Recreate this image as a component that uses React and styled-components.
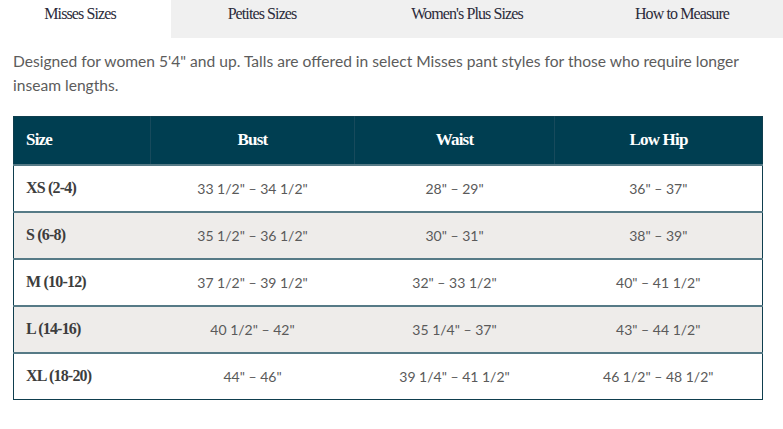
import React, { useState } from 'react';
import styled, { createGlobalStyle } from 'styled-components';

const GlobalStyle = createGlobalStyle`
  body {
    margin: 0;
    background: #fff;
    font-family: 'Lato', 'Open Sans', sans-serif;
  }
`;

const Page = styled.div`
  width: 783px;
`;

const TabBar = styled.div`
  display: grid;
  grid-template-columns: 171px 182px 228px 1fr;
  height: 38px;
  background: #f0f0f0;
`;

const Tab = styled.button`
  border: none;
  margin: 0;
  padding: 5px 0 0;
  align-self: stretch;
  display: flex;
  justify-content: center;
  align-items: flex-start;
  background: ${({ $active }) => ($active ? '#fff' : 'transparent')};
  font-family: 'Liberation Serif', 'DejaVu Serif', serif;
  font-size: 16px;
  letter-spacing: -0.9px;
  color: #2b2b3a;
  cursor: pointer;
  &:first-child {
    padding-right: 11px;
  }
`;

const Intro = styled.p`
  margin: 11px 0 19px;
  padding: 0 23px 0 13px;
  font-size: 15.6px;
  line-height: 24px;
  color: #5c5c5c;
`;

const Table = styled.table`
  margin-left: 13px;
  width: 750px;
  border-collapse: collapse;
  border: 1px solid #0f3e4e;
  table-layout: fixed;
`;

const HeadRow = styled.tr`
  background: #003e51;
  height: 48px;
`;

const HeadCell = styled.th`
  font-family: 'Liberation Serif', 'DejaVu Serif', serif;
  font-weight: bold;
  font-size: 17px;
  letter-spacing: -0.8px;
  color: #fff;
  text-align: ${({ $left }) => ($left ? 'left' : 'center')};
  padding: 0 0 0 ${({ $left }) => ($left ? '12px' : '0')};
  border-left: 1px solid #174a5c;
  &:first-child {
    border-left: none;
  }
`;

const Row = styled.tr`
  height: 47px;
  background: ${({ $shaded }) => ($shaded ? '#eeecea' : '#fff')};
  border-top: 2px solid #567a86;
`;

const SizeCell = styled.td`
  padding-left: 12px;
  font-family: 'Liberation Serif', 'DejaVu Serif', serif;
  font-weight: bold;
  font-size: 16px;
  letter-spacing: -0.8px;
  color: #3d3d3d;
`;

const ValueCell = styled.td`
  text-align: center;
  font-size: 14px;
  color: #5a5a5a;
`;

const tabs = ['Misses Sizes', 'Petites Sizes', "Women's Plus Sizes", 'How to Measure'];

const rows = [
  ['XS (2-4)', '33 1/2" – 34 1/2"', '28" – 29"', '36" – 37"'],
  ['S (6-8)', '35 1/2" – 36 1/2"', '30" – 31"', '38" – 39"'],
  ['M (10-12)', '37 1/2" – 39 1/2"', '32" – 33 1/2"', '40" – 41 1/2"'],
  ['L (14-16)', '40 1/2" – 42"', '35 1/4" – 37"', '43" – 44 1/2"'],
  ['XL (18-20)', '44" – 46"', '39 1/4" – 41 1/2"', '46 1/2" – 48 1/2"'],
];

const App = () => {
  const [active, setActive] = useState(0);

  return (
    <Page>
      <GlobalStyle />
      <TabBar>
        {tabs.map((t, i) => (
          <Tab key={t} $active={i === active} onClick={() => setActive(i)}>
            {t}
          </Tab>
        ))}
      </TabBar>
      <Intro>
        Designed for women 5'4" and up. Talls are offered in select Misses pant styles for those who require longer
        inseam lengths.
      </Intro>
      <Table>
        <colgroup>
          <col style={{ width: 137 }} />
          <col style={{ width: 204 }} />
          <col style={{ width: 200 }} />
          <col />
        </colgroup>
        <thead>
          <HeadRow>
            <HeadCell $left>Size</HeadCell>
            <HeadCell>Bust</HeadCell>
            <HeadCell>Waist</HeadCell>
            <HeadCell>Low Hip</HeadCell>
          </HeadRow>
        </thead>
        <tbody>
          {rows.map((r, i) => (
            <Row key={r[0]} $shaded={i % 2 === 1}>
              <SizeCell>{r[0]}</SizeCell>
              <ValueCell>{r[1]}</ValueCell>
              <ValueCell>{r[2]}</ValueCell>
              <ValueCell>{r[3]}</ValueCell>
            </Row>
          ))}
        </tbody>
      </Table>
    </Page>
  );
};

export default App;
